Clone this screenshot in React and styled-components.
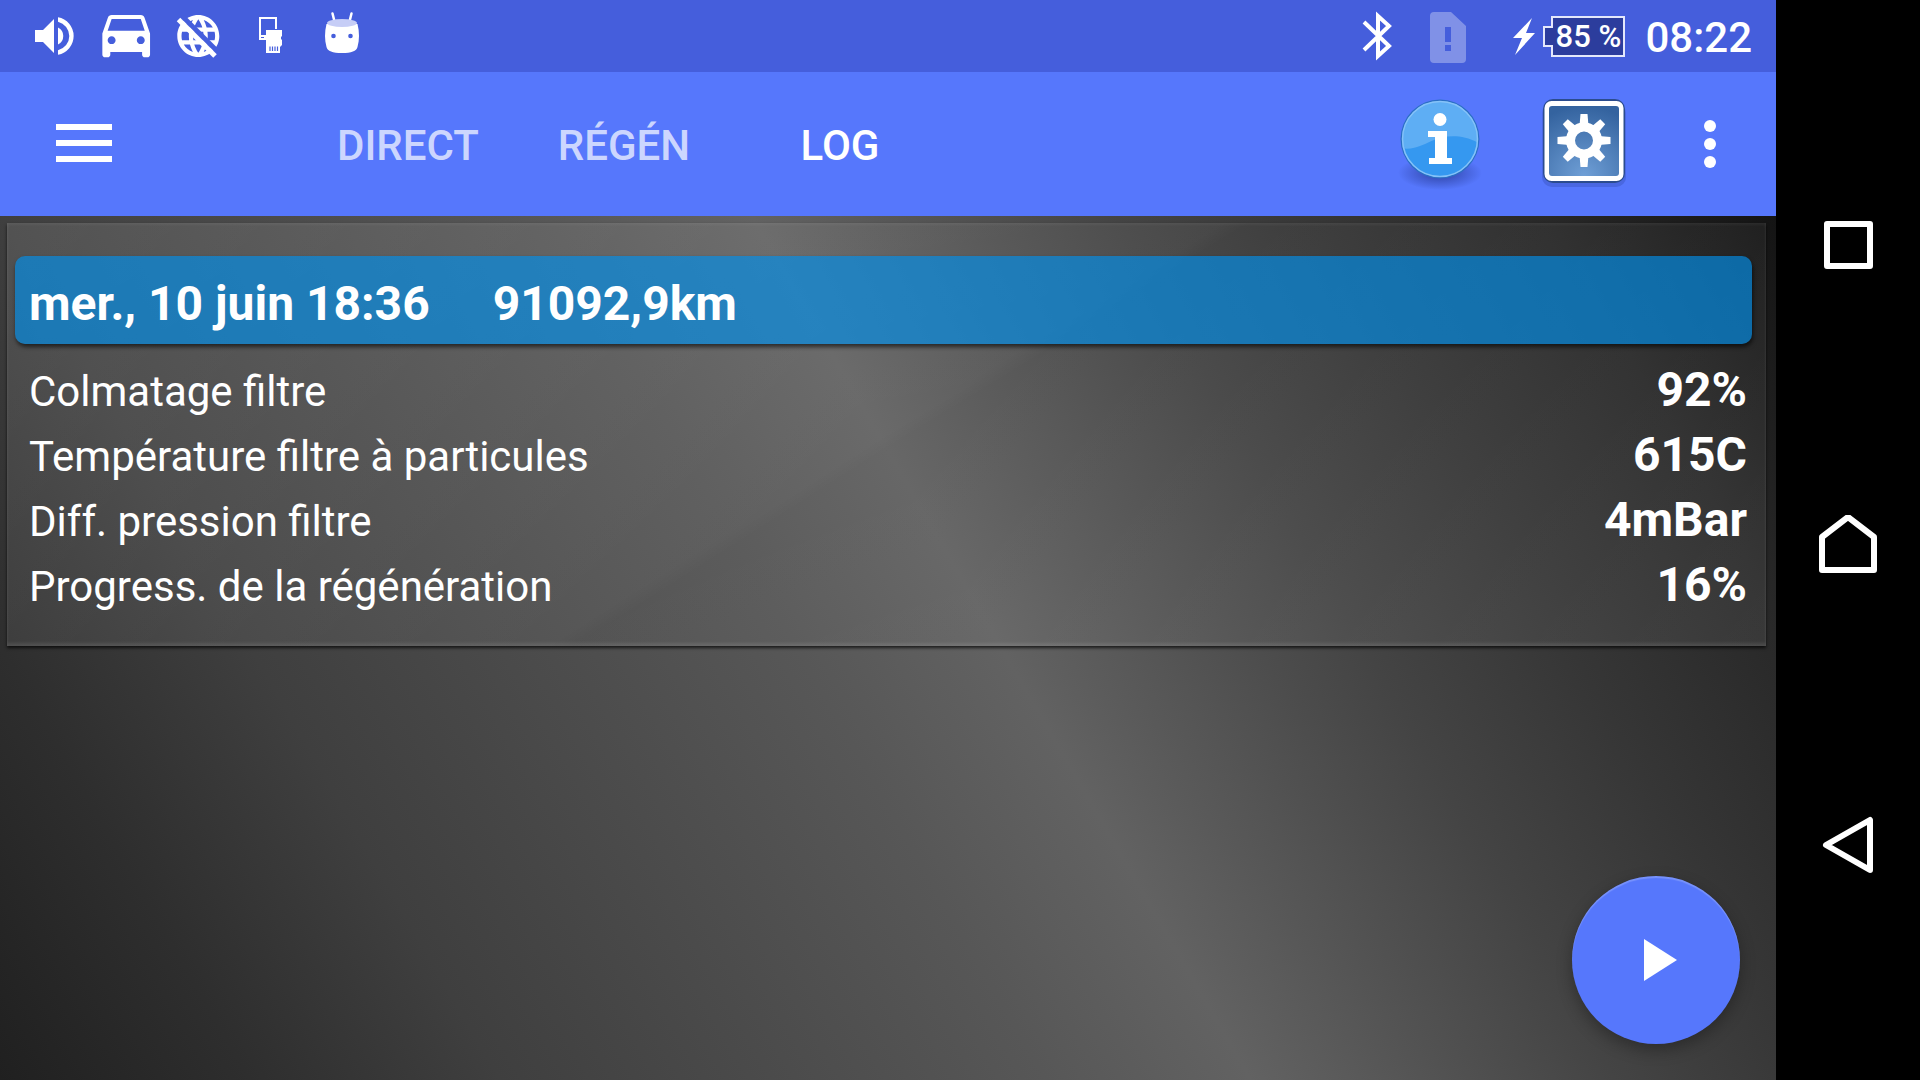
import React from 'react';
import styled, { createGlobalStyle } from 'styled-components';

const GlobalStyle = createGlobalStyle`
  *, *::before, *::after { box-sizing: border-box; }

  body {
    margin: 0;
    background: #000;
    color: #fff;
    font-family: Roboto, "Noto Sans", sans-serif;
  }
`;

const Device = styled.div`
  display: flex;
  min-height: 100vh;
`;

const Screen = styled.div`
  flex: 1;
  min-width: 0;
  display: flex;
  flex-direction: column;
`;

const StatusBar = styled.header`
  display: flex;
  align-items: center;
  justify-content: space-between;
  height: 72px;
  padding: 0 24px 0 18px;
  background: #455edc;
`;

const StatusIcon = styled.svg`
  display: block;
  width: 72px;
  height: 72px;
  fill: #fff;
`;

const StatusGroup = styled.div`
  display: flex;
  align-items: center;
`;

const Battery = styled.span`
  display: flex;
  align-items: center;
`;

const BatteryNub = styled.span`
  width: 10px;
  height: 21px;
  margin-right: -2px;
  border: 2px solid #e4e8fb;
  border-right: 0;
  background: #2c3d9d;
  z-index: 1;
`;

const BatteryBody = styled.span`
  height: 41px;
  width: 74px;
  border: 2px solid #e4e8fb;
  background: #2c3d9d;
  font-size: 31px;
  font-weight: 500;
  line-height: 37px;
  text-align: center;
  white-space: nowrap;
`;

const Clock = styled.time`
  margin-left: 20px;
  padding-top: 3px;
  font-size: 42px;
  font-weight: 500;
  line-height: 72px;
`;

const AppBar = styled.nav`
  display: flex;
  align-items: center;
  height: 144px;
  padding-right: 12px;
  background: #5677fc;
`;

const IconButton = styled.button`
  display: grid;
  place-items: center;
  width: ${({ $width }) => $width}px;
  height: 144px;
  padding: 0;
  border: 0;
  background: none;
  color: #fff;
  cursor: pointer;

  svg { display: block; }
`;

const Tabs = styled.div`
  display: flex;
  flex: 1;
  margin-left: 132px;
`;

const Tab = styled.button`
  width: 216px;
  height: 144px;
  padding: 2px 0 0;
  border: 0;
  background: none;
  color: ${({ $active }) => ($active ? '#fff' : '#ccd6fe')};
  font: 500 42px Roboto, "Noto Sans", sans-serif;
  cursor: pointer;
`;

const Content = styled.main`
  position: relative;
  flex: 1;
  padding: 7px 10px 7px 7px;
  background: linear-gradient(
    60deg,
    #202020 0%,
    #2e2e2e 11%,
    #3f3f3f 22%,
    #4b4b4b 34%,
    #575757 46%,
    #626262 55%,
    #555 62%,
    #444 71%,
    #363636 80%,
    #282828 90%,
    #141414 100%
  );
`;

const Card = styled.section`
  padding: 33px 14px 28px 8px;
  background: linear-gradient(
    148deg,
    rgba(255, 255, 255, 0.1) 0%,
    rgba(255, 255, 255, 0.05) 50%,
    rgba(255, 255, 255, 0.03) 51%,
    rgba(255, 255, 255, 0.07) 100%
  );
  box-shadow:
    0 2px 3px rgba(0, 0, 0, 0.7),
    inset 0 -3px 3px rgba(255, 255, 255, 0.09),
    inset 0 2px 3px rgba(255, 255, 255, 0.05);
`;

const Banner = styled.h2`
  display: flex;
  gap: 63px;
  margin: 0;
  padding: 6px 14px 0;
  height: 88px;
  border-radius: 10px;
  background: rgba(2, 143, 234, 0.66);
  box-shadow: 1px 3px 4px rgba(0, 0, 0, 0.6);
  font-size: 48px;
  font-weight: 700;
  line-height: 83px;
`;

const Readings = styled.table`
  width: 100%;
  margin-top: 14px;
  border-collapse: collapse;
`;

const ReadingLabel = styled.th`
  padding: 0 0 0 14px;
  font-size: 42px;
  font-weight: 400;
  line-height: 63px;
  text-align: left;
  vertical-align: baseline;
`;

const ReadingValue = styled.td`
  padding: 0 5px 0 0;
  font-size: 48px;
  font-weight: 700;
  line-height: 63px;
  text-align: right;
  vertical-align: baseline;
`;

const Fab = styled.button`
  position: absolute;
  right: 36px;
  bottom: 36px;
  display: grid;
  place-items: center;
  width: 168px;
  height: 168px;
  padding: 0;
  border: 0;
  border-radius: 50%;
  background: #5677fc;
  box-shadow:
    0 6px 16px rgba(0, 0, 0, 0.3),
    inset 0 2px 1px rgba(255, 255, 255, 0.2);
  cursor: pointer;
`;

const SystemNav = styled.aside`
  display: grid;
  grid-template-rows: repeat(3, 1fr);
  width: 144px;
  padding: 95px 0 85px;
  background: #000;
`;

const SystemButton = styled.button`
  display: grid;
  place-items: center;
  padding: 0;
  border: 0;
  background: none;
  cursor: pointer;

  svg {
    fill: none;
    stroke: #fff;
    stroke-width: 6;
    stroke-linejoin: round;
  }
`;

const VolumeIcon = () => (
  <StatusIcon viewBox="0 0 72 72" aria-hidden="true">
    <path d="M17 30h8l11-11v34l-11-11h-8z" />
    <path d="M40 27.5a9.5 9.5 0 0 1 0 17z" />
    <path d="M40 17.3v4.4a14.7 14.7 0 0 1 0 28.6v4.4a19 19 0 0 0 0-37.4z" />
  </StatusIcon>
);

const CarIcon = () => (
  <StatusIcon viewBox="0 0 72 72" aria-hidden="true">
    <path
      transform="translate(4.4 1.7) scale(2.65)"
      d="M18.92 6.01C18.72 5.42 18.16 5 17.5 5h-11c-.66 0-1.21.42-1.42 1.01L3 12v8c0 .55.45 1 1 1h1c.55 0 1-.45 1-1v-1h12v1c0 .55.45 1 1 1h1c.55 0 1-.45 1-1v-8l-2.08-5.99zM6.5 16c-.83 0-1.5-.67-1.5-1.5S5.67 13 6.5 13s1.5.67 1.5 1.5S7.33 16 6.5 16zm11 0c-.83 0-1.5-.67-1.5-1.5s.67-1.5 1.5-1.5 1.5.67 1.5 1.5-.67 1.5-1.5 1.5zM5 11l1.5-4.5h11L19 11H5z"
    />
  </StatusIcon>
);

const OfflineIcon = () => (
  <StatusIcon viewBox="0 0 72 72" aria-hidden="true">
    <path
      transform="translate(11.1 10.8) scale(2.1)"
      d="M11.99 2C6.47 2 2 6.48 2 12s4.47 10 9.99 10C17.52 22 22 17.52 22 12S17.52 2 11.99 2zm6.93 6h-2.95c-.32-1.25-.78-2.45-1.38-3.56 1.84.63 3.37 1.91 4.33 3.56zM12 4.04c.83 1.2 1.48 2.53 1.91 3.96h-3.82c.43-1.43 1.08-2.76 1.91-3.96zM4.26 14C4.1 13.36 4 12.69 4 12s.1-1.36.26-2h3.38c-.08.66-.14 1.32-.14 2 0 .68.06 1.34.14 2H4.26zm.82 2h2.95c.32 1.25.78 2.45 1.38 3.56-1.84-.63-3.37-1.9-4.33-3.56zm2.95-8H5.08c.96-1.66 2.49-2.93 4.33-3.56C8.81 5.55 8.35 6.75 8.03 8zM12 19.96c-.83-1.2-1.48-2.53-1.91-3.96h3.82c-.43 1.43-1.08 2.76-1.91 3.96zM14.34 14H9.66c-.09-.66-.16-1.32-.16-2 0-.68.07-1.35.16-2h4.68c.09.65.16 1.32.16 2 0 .68-.07 1.34-.16 2zm.25 5.56c.6-1.11 1.06-2.31 1.38-3.56h2.95c-.96 1.65-2.49 2.93-4.33 3.56zM16.36 14c.08-.66.14-1.32.14-2 0-.68-.06-1.34-.14-2h3.38c.16.64.26 1.31.26 2s-.1 1.36-.26 2h-3.38z"
    />
    <path d="M18 14l40 40" stroke="#455edc" strokeWidth="5" />
    <path d="M16.5 19.5L53 56" stroke="#fff" strokeWidth="5" />
  </StatusIcon>
);

const StorageIcon = () => (
  <StatusIcon viewBox="0 0 72 72" aria-hidden="true">
    <path d="M25 17h18v12h-2V19H27v16h5v5h-7zM27 37v1h3v-1z" fillRule="evenodd" />
    <path d="M32 30h16v6l-1 1v2l1 1v5l-2 2v6H32z" />
    <path d="M36 46.5v4.5M38.5 46.5v4.5M41 46.5v4.5M43.5 46.5v4.5" stroke="#455edc" strokeWidth="1.2" />
  </StatusIcon>
);

const DroidIcon = () => (
  <StatusIcon viewBox="0 0 72 72" aria-hidden="true">
    <path d="M26.5 13.5l2 8M45.5 13.5l-2 8" stroke="#fff" strokeWidth="2.5" strokeLinecap="round" />
    <path d="M20.5 24c-2 8-2 16 0 23 1 4 6 6 15.5 6s14.5-2 15.5-6c2-7 2-15 0-23z" />
    <ellipse cx="36" cy="23" rx="15" ry="4" fill="#c6cdf6" />
    <circle cx="27.5" cy="36" r="2.3" fill="#455edc" />
    <circle cx="44.5" cy="36" r="2.3" fill="#455edc" />
  </StatusIcon>
);

const BluetoothIcon = () => (
  <StatusIcon viewBox="0 0 72 72" aria-hidden="true">
    <path
      d="M25 22l25 24-11 10V16l11 10-25 24"
      fill="none"
      stroke="#fff"
      strokeWidth="4"
    />
  </StatusIcon>
);

const SimIcon = () => (
  <StatusIcon viewBox="0 0 72 72" aria-hidden="true">
    <path
      d="M23 12h17l15 14v33q0 4-4 4H23q-4 0-4-4V16q0-4 4-4zM34 27v15h6V27zM34 45v6h6v-6z"
      fillRule="evenodd"
      opacity="0.32"
    />
  </StatusIcon>
);

const InfoIcon = () => (
  <svg width="88" height="100" viewBox="0 0 88 100" aria-hidden="true">
    <defs>
      <radialGradient id="infoShadow">
        <stop offset="0.2" stopColor="#24368f" stopOpacity="0.65" />
        <stop offset="1" stopColor="#24368f" stopOpacity="0" />
      </radialGradient>
      <clipPath id="infoDisc"><circle cx="44" cy="45" r="38" /></clipPath>
    </defs>
    <ellipse cx="44" cy="79" rx="42" ry="17" fill="url(#infoShadow)" />
    <circle cx="44" cy="45" r="39.5" fill="#2b6fc4" />
    <g clipPath="url(#infoDisc)">
      <rect width="88" height="100" fill="#5eaef4" />
      <path d="M4 54c14 3 24-4 34-8s28-7 46 4v40H4z" fill="#3598f0" />
    </g>
    <circle cx="44" cy="45" r="37.5" fill="none" stroke="#85c2f8" strokeWidth="1.5" />
    <circle cx="44" cy="25.5" r="6.5" fill="#fff" />
    <path d="M32 37h19v27h5v6H33v-6h6V43h-7z" fill="#fff" />
  </svg>
);

const teeth = [0, 45, 90, 135, 180, 225, 270, 315];

const SettingsIcon = () => (
  <svg width="90" height="96" viewBox="0 0 90 96" aria-hidden="true">
    <defs>
      <radialGradient id="plate" cx="0.5" cy="1" r="1">
        <stop offset="0" stopColor="#6f9fd6" />
        <stop offset="1" stopColor="#34639f" />
      </radialGradient>
    </defs>
    <rect x="3" y="7" width="84" height="84" rx="10" fill="#24368f" opacity="0.25" />
    <rect x="4" y="3" width="82" height="84" rx="10" fill="#2b4c8e" />
    <rect x="5.5" y="5" width="79" height="80" rx="7" fill="#fff" />
    <rect x="10" y="10" width="70" height="70" rx="3" fill="url(#plate)" />
    <g fill="#fff">
      {teeth.map((angle) => (
        <path key={angle} d="M40.5 30l1-12h7l1 12z" transform={`rotate(${angle} 45 44.5)`} />
      ))}
    </g>
    <circle cx="45" cy="44.5" r="13.5" fill="none" stroke="#fff" strokeWidth="9" />
  </svg>
);

const tabs = ['DIRECT', 'RÉGÉN', 'LOG'];

const readings = [
  { label: 'Colmatage filtre', value: '92%' },
  { label: 'Température filtre à particules', value: '615C' },
  { label: 'Diff. pression filtre', value: '4mBar' },
  { label: 'Progress. de la régénération', value: '16%' },
];

const App = () => (
  <>
    <GlobalStyle />
    <Device>
      <Screen>
        <StatusBar>
          <StatusGroup>
            <VolumeIcon />
            <CarIcon />
            <OfflineIcon />
            <StorageIcon />
            <DroidIcon />
          </StatusGroup>
          <StatusGroup>
            <BluetoothIcon />
            <SimIcon />
            <svg width="60" height="72" viewBox="0 0 60 72" fill="#fff" aria-hidden="true">
              <path d="M49 18L30 38h9l-7 17 20-22h-9z" />
            </svg>
            <Battery>
              <BatteryNub />
              <BatteryBody>85 %</BatteryBody>
            </Battery>
            <Clock>08:22</Clock>
          </StatusGroup>
        </StatusBar>

        <AppBar>
          <IconButton $width={168} aria-label="Menu">
            <svg width="56" height="40" viewBox="0 0 56 40" fill="#fff">
              <path d="M0 0h56v6H0zM0 16h56v6H0zM0 32h56v6H0z" />
            </svg>
          </IconButton>
          <Tabs role="tablist">
            {tabs.map((tab) => (
              <Tab key={tab} role="tab" $active={tab === 'LOG'} aria-selected={tab === 'LOG'}>
                {tab}
              </Tab>
            ))}
          </Tabs>
          <IconButton $width={144} aria-label="Informations"><InfoIcon /></IconButton>
          <IconButton $width={144} aria-label="Paramètres"><SettingsIcon /></IconButton>
          <IconButton $width={108} aria-label="Plus">
            <svg width="12" height="48" viewBox="0 0 12 48" fill="#fff">
              <circle cx="6" cy="6" r="6" />
              <circle cx="6" cy="24" r="6" />
              <circle cx="6" cy="42" r="6" />
            </svg>
          </IconButton>
        </AppBar>

        <Content>
          <Card>
            <Banner>
              <span>mer., 10 juin 18:36</span>
              <span>91092,9km</span>
            </Banner>
            <Readings>
              <tbody>
                {readings.map(({ label, value }) => (
                  <tr key={label}>
                    <ReadingLabel scope="row">{label}</ReadingLabel>
                    <ReadingValue>{value}</ReadingValue>
                  </tr>
                ))}
              </tbody>
            </Readings>
          </Card>
          <Fab aria-label="Lecture">
            <svg width="48" height="42" viewBox="0 0 48 42" fill="#fff">
              <path d="M12 0l33 21-33 21z" />
            </svg>
          </Fab>
        </Content>
      </Screen>

      <SystemNav>
        <SystemButton aria-label="Applications récentes">
          <svg width="60" height="60" viewBox="0 0 60 60"><path d="M9 9h43v42H9z" /></svg>
        </SystemButton>
        <SystemButton aria-label="Accueil">
          <svg width="60" height="60" viewBox="0 0 60 60"><path d="M4 22L30 2l26 20v33H4z" /></svg>
        </SystemButton>
        <SystemButton aria-label="Retour">
          <svg width="60" height="60" viewBox="0 0 60 60"><path d="M8 30L52 5v50z" /></svg>
        </SystemButton>
      </SystemNav>
    </Device>
  </>
);

export default App;
